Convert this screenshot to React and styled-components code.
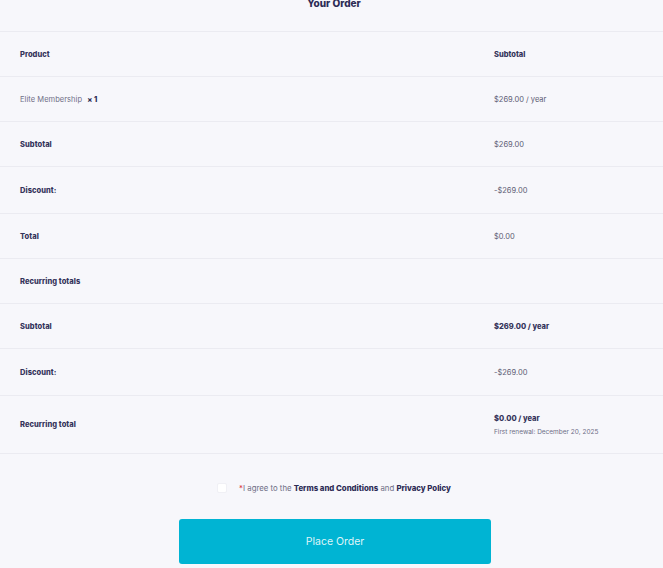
import React, { useState } from 'react';
import styled, { createGlobalStyle } from 'styled-components';

const GlobalStyle = createGlobalStyle`
  html, body {
    margin: 0;
    padding: 0;
    background: #f7f7fb;
  }
  body {
    font-family: Inter, "Noto Sans", "Liberation Sans", sans-serif;
    color: #2d2c55;
    -webkit-font-smoothing: antialiased;
  }
`;

const Page = styled.div`
  width: 663px;
  height: 568px;
  overflow: hidden;
  background: #f7f7fb;
`;

const Title = styled.h3`
  margin: -5px 0 0;
  padding-left: 5px;
  height: 37px;
  box-sizing: border-box;
  font-size: 10px;
  line-height: 16px;
  font-weight: 800;
  text-align: center;
  color: #2d2c55;
  border-bottom: 1px solid #ebebf1;
`;

const Table = styled.div`
  display: flex;
  flex-direction: column;
`;

const Row = styled.div`
  display: grid;
  grid-template-columns: 494px 1fr;
  align-items: center;
  height: ${(props) => props.h || 45}px;
  box-sizing: border-box;
  border-bottom: 1px solid #ebebf1;
`;

const Label = styled.div`
  padding-left: 20px;
  font-size: 7.5px;
  font-weight: ${(props) => (props.plain ? 400 : 800)};
  color: ${(props) => (props.plain ? '#6f6e86' : '#34335a')};
  letter-spacing: 0.05px;
`;

const Qty = styled.strong`
  margin-left: 5px;
  font-weight: 800;
  color: #2d2c55;
`;

const Value = styled.div`
  font-size: 7.5px;
  font-weight: ${(props) => (props.bold ? 800 : 400)};
  color: ${(props) => (props.bold ? '#34335a' : '#5d5c74')};
  display: flex;
  flex-direction: column;
  gap: 5px;
`;

const Note = styled.span`
  font-size: 6.5px;
  font-weight: 400;
  color: #6f6e86;
`;

const Terms = styled.label`
  display: flex;
  align-items: center;
  justify-content: center;
  gap: 12px;
  margin-top: 29px;
  padding-left: 5px;
  font-size: 7.8px;
  color: #6f6e86;
`;

const Check = styled.span`
  width: 10px;
  height: 10px;
  border-radius: 2px;
  background: #ffffff;
  border: 1px solid #f0f0f5;
  box-sizing: border-box;
`;

const Req = styled.span`
  color: #d9303a;
`;

const Strong = styled.strong`
  font-weight: 800;
  color: #2d2c55;
`;

const Actions = styled.div`
  display: flex;
  justify-content: center;
  padding-top: 26px;
  padding-left: 7px;
`;

const PlaceButton = styled.button`
  width: 312px;
  height: 45px;
  border: none;
  border-radius: 3px;
  background: #00b4d3;
  color: #dff4f8;
  font-family: inherit;
  font-size: 10.5px;
  font-weight: 400;
  cursor: pointer;
`;

const rows = [
  { label: 'Product', value: 'Subtotal', bold: true, h: 45 },
  { label: 'Elite Membership', qty: true, value: '$269.00 / year', plain: true, h: 45 },
  { label: 'Subtotal', value: '$269.00', h: 45 },
  { label: 'Discount:', value: '-$269.00', h: 47 },
  { label: 'Total', value: '$0.00', h: 45 },
  { label: 'Recurring totals', value: '', h: 45 },
  { label: 'Subtotal', value: '$269.00 / year', bold: true, h: 45 },
  { label: 'Discount:', value: '-$269.00', h: 47 },
  {
    label: 'Recurring total',
    value: '$0.00 / year',
    bold: true,
    note: 'First renewal: December 20, 2025',
    h: 58,
  },
];

export default function App() {
  const [agreed, setAgreed] = useState(false);

  return (
    <Page>
      <GlobalStyle />
      <Title>Your Order</Title>
      <Table>
        {rows.map((row, i) => (
          <Row key={i} h={row.h}>
            <Label plain={row.plain}>
              {row.label}
              {row.qty && <Qty>× 1</Qty>}
            </Label>
            <Value bold={row.bold}>
              {row.value}
              {row.note && <Note>{row.note}</Note>}
            </Value>
          </Row>
        ))}
      </Table>
      <Terms onClick={() => setAgreed(!agreed)}>
        <Check />
        <span>
          <Req>*</Req>I agree to the <Strong>Terms and Conditions</Strong> and{' '}
          <Strong>Privacy Policy</Strong>
        </span>
      </Terms>
      <Actions>
        <PlaceButton>Place Order</PlaceButton>
      </Actions>
    </Page>
  );
}
